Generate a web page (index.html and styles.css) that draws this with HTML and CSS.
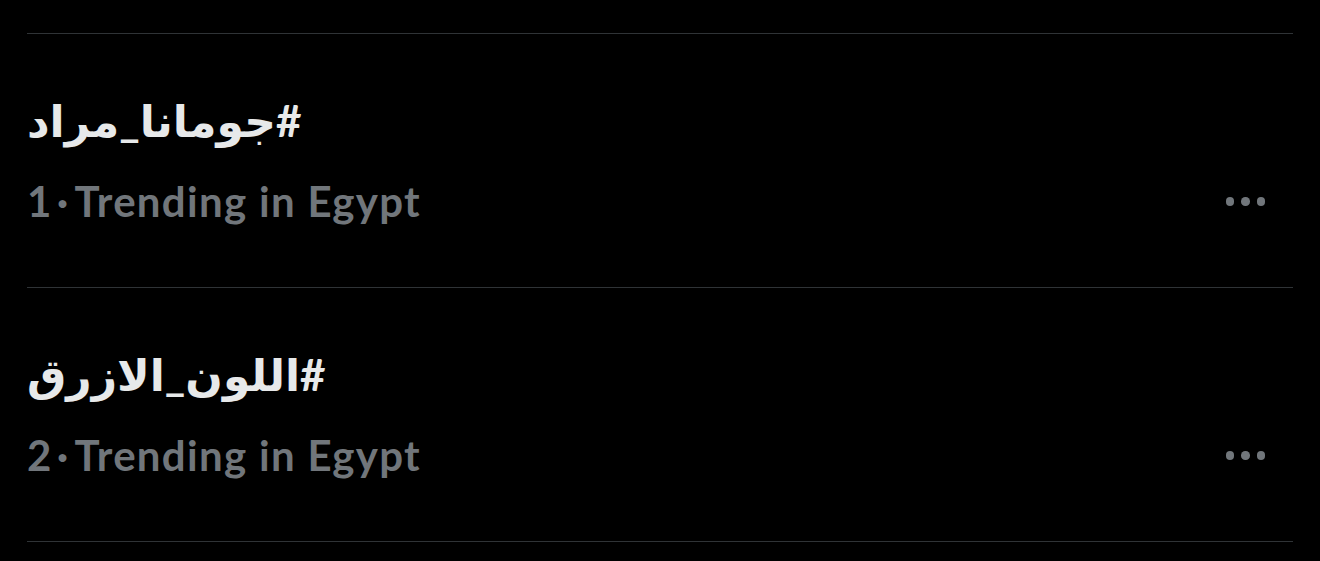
FILE: index.html
```html
<!DOCTYPE html>
<html lang="en">
<head>
<meta charset="utf-8">
<link rel="stylesheet" href="styles.css">
</head>
<body>
<main class="list">
  <section class="trend">
    <div class="title"><span dir="rtl">#جومانا_مراد</span></div>
    <div class="meta">
      <span class="sub">1<span class="dot">·</span>Trending in Egypt</span>
      <span class="more" aria-label="More"><i></i><i></i><i></i></span>
    </div>
  </section>
  <section class="trend">
    <div class="title"><span dir="rtl">#اللون_الازرق</span></div>
    <div class="meta">
      <span class="sub">2<span class="dot">·</span>Trending in Egypt</span>
      <span class="more" aria-label="More"><i></i><i></i><i></i></span>
    </div>
  </section>
</main>
</body>
</html>
```
FILE: styles.css
```css
html, body {
  margin: 0;
  padding: 0;
  background: #000;
}
body {
  height: 561px;
  overflow: hidden;
  font-family: Lato, "DejaVu Sans", sans-serif;
}
.list {
  margin: 33px 27px 0;
  border-top: 1px solid #2f3336;
}
.trend {
  height: 254px;
  border-bottom: 1px solid #2f3336;
  padding: 57px 28px 0 0;
  box-sizing: border-box;
}
.title {
  color: #e7e9ea;
  font-size: 44px;
  font-weight: 700;
  line-height: 58px;
}
.title span {
  display: inline-block;
}
.meta {
  margin-top: 27px;
  display: flex;
  align-items: center;
  justify-content: space-between;
}
.sub {
  color: #71767b;
  font-size: 42px;
  font-weight: 700;
  line-height: 50px;
  letter-spacing: 1.3px;
}
.dot {
  margin: 0 5px 0 4px;
}
.more {
  display: flex;
  gap: 7px;
  margin-top: 1px;
}
.more i {
  width: 8.5px;
  height: 8.5px;
  border-radius: 50%;
  background: #71767b;
}
```
